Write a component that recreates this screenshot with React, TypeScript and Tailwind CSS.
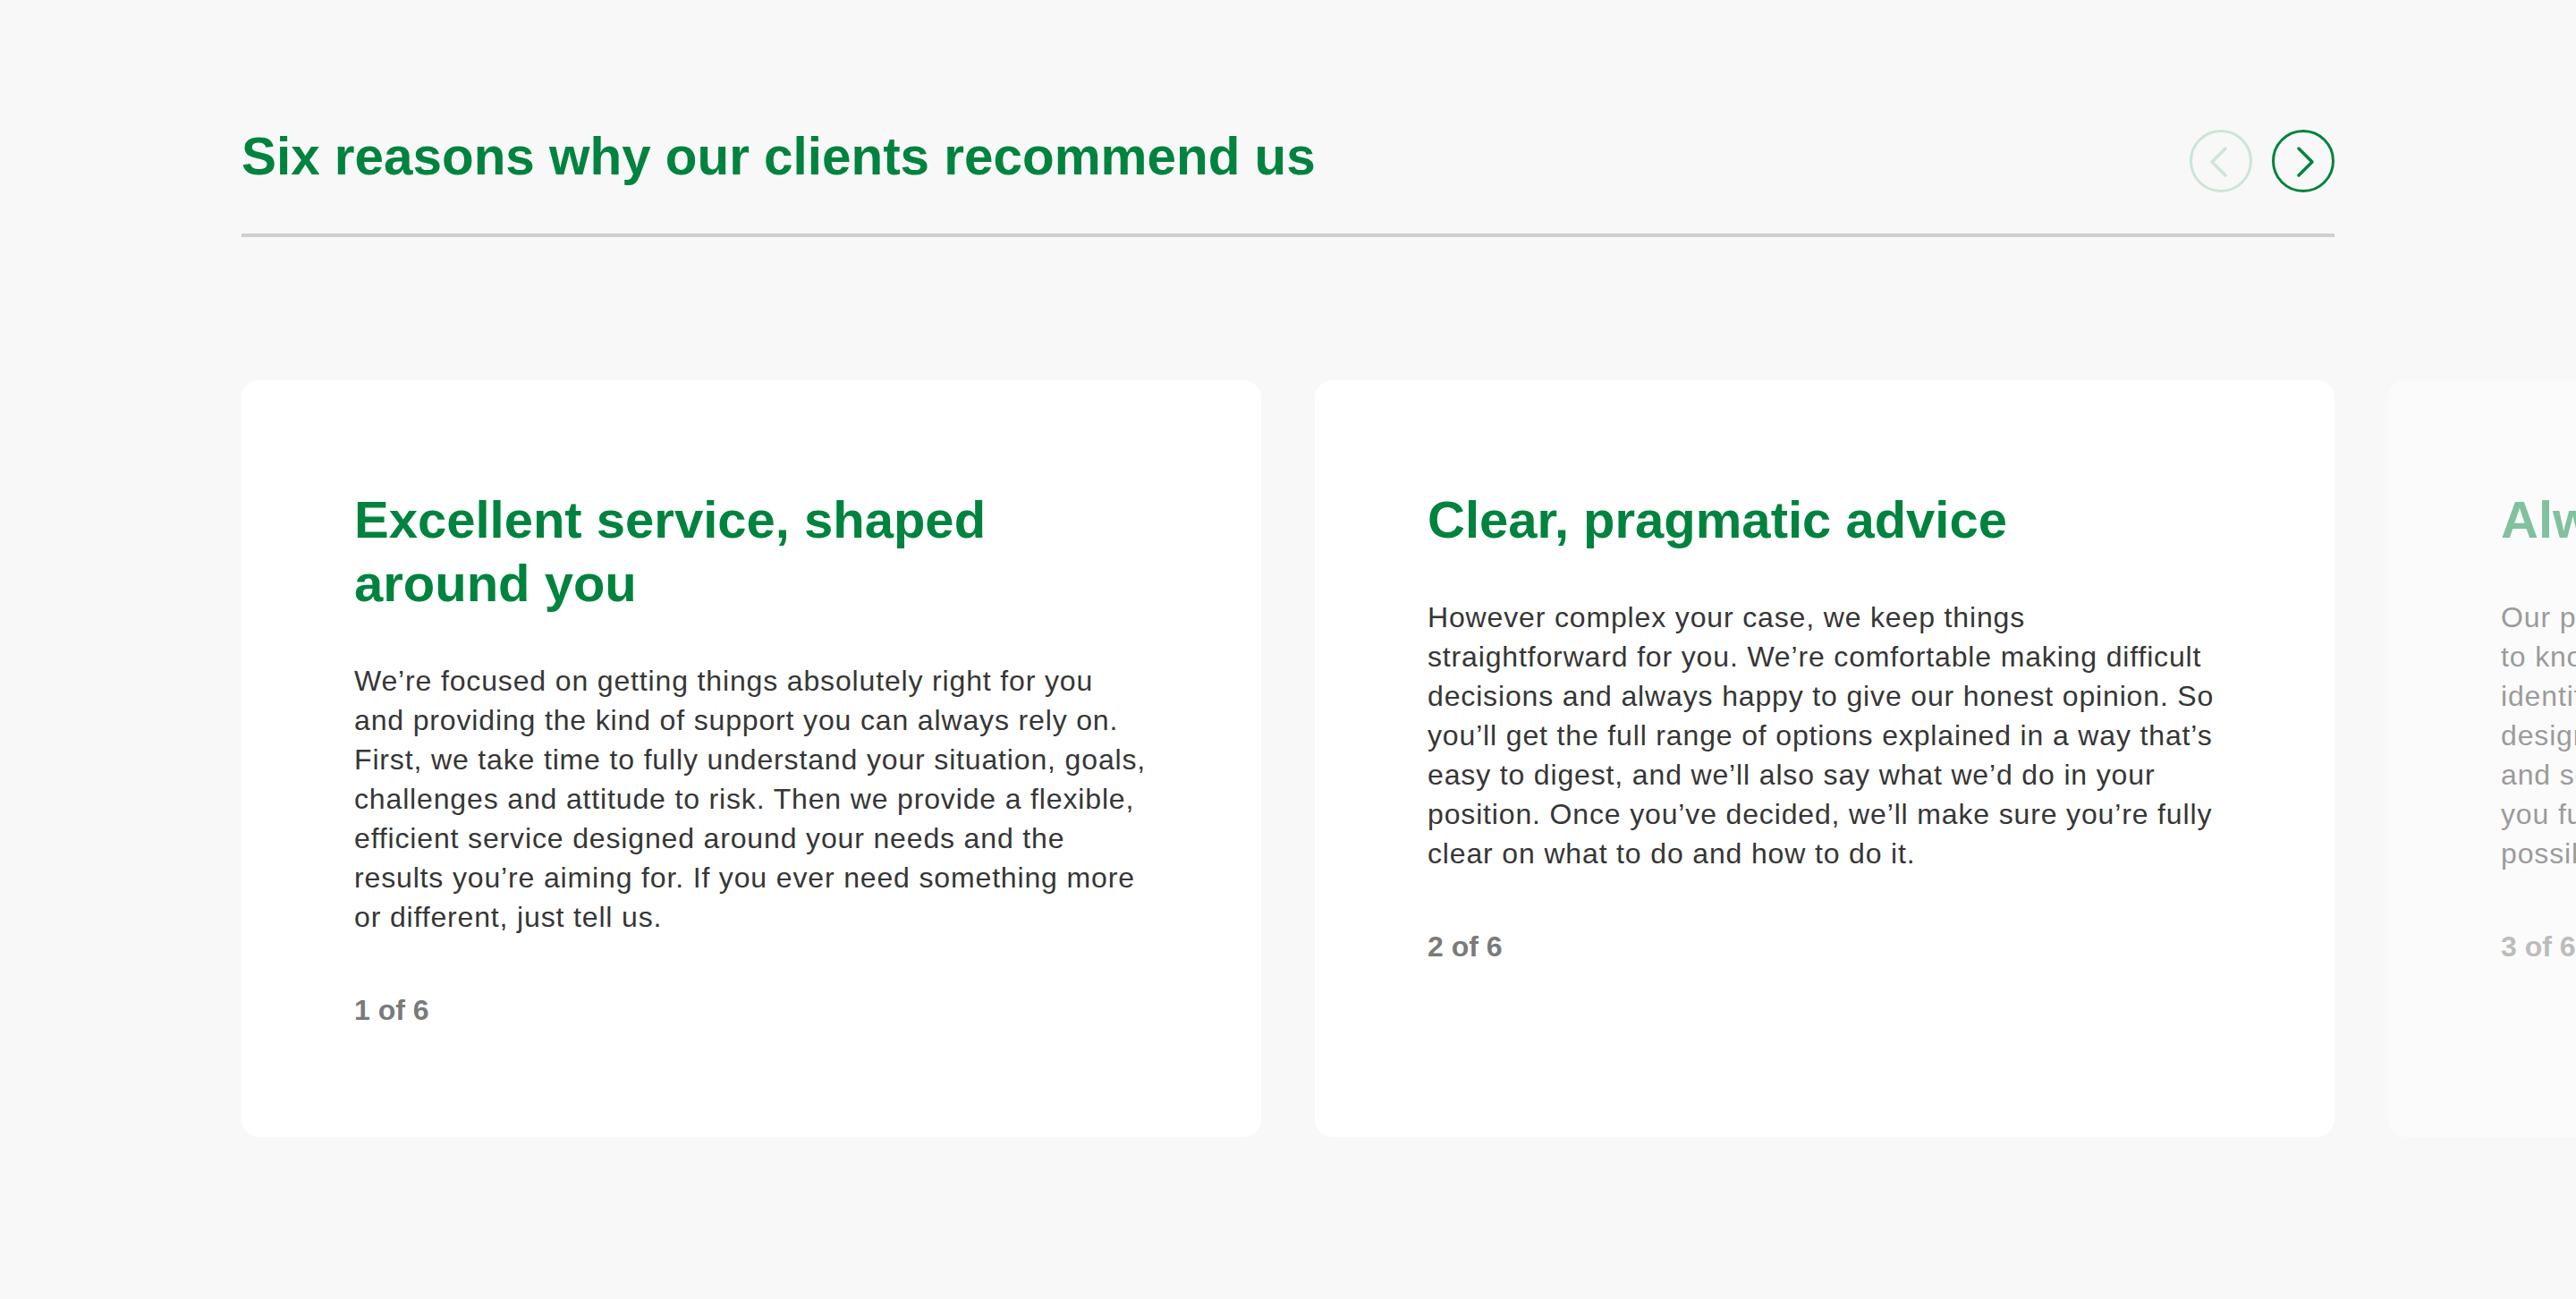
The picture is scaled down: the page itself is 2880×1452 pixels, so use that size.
import React from "react";

type Reason = {
  title: string;
  lines: string[];
};

const REASONS: Reason[] = [
  {
    title: "Excellent service, shaped around you",
    lines: [
      "We’re focused on getting things absolutely right for you",
      "and providing the kind of support you can always rely on.",
      "First, we take time to fully understand your situation, goals,",
      "challenges and attitude to risk. Then we provide a flexible,",
      "efficient service designed around your needs and the",
      "results you’re aiming for. If you ever need something more",
      "or different, just tell us."
    ]
  },
  {
    title: "Clear, pragmatic advice",
    lines: [
      "However complex your case, we keep things",
      "straightforward for you. We’re comfortable making difficult",
      "decisions and always happy to give our honest opinion. So",
      "you’ll get the full range of options explained in a way that’s",
      "easy to digest, and we’ll also say what we’d do in your",
      "position. Once you’ve decided, we’ll make sure you’re fully",
      "clear on what to do and how to do it."
    ]
  },
  {
    title: "Always there when you need us",
    lines: [
      "Our people take the time to get",
      "to know you, understand what you need,",
      "identify the issues that matter and",
      "design the right solutions with you,",
      "and so you can feel confident that",
      "you fully understand every step as",
      "possible, and that we’re always there."
    ]
  }
];

function ArrowButton({ dir, disabled }: { dir: "prev" | "next"; disabled?: boolean }) {
  const color = disabled ? "#cce5d6" : "#00833e";
  return (
    <button
      type="button"
      aria-label={dir === "prev" ? "Previous" : "Next"}
      disabled={disabled}
      className={
        "w-[70px] h-[70px] rounded-full border-[3px] flex items-center justify-center " +
        (disabled ? "border-[#cce5d6] cursor-default" : "border-[#00833e]")
      }
    >
      <svg width="70" height="70" viewBox="0 0 70 70" fill="none" className="shrink-0">
        <path
          d={dir === "prev" ? "M40 21 L25 36 L40 51" : "M30 21 L45 36 L30 51"}
          stroke={color}
          strokeWidth="3.5"
          strokeLinecap="round"
          strokeLinejoin="round"
        />
      </svg>
    </button>
  );
}

function ReasonCard({ reason, index, total, faded }: { reason: Reason; index: number; total: number; faded?: boolean }) {
  // the card that's only half in view is washed out rather than hidden
  return (
    <div
      className={
        "flex-none w-[1140px] rounded-[20px] pl-[126px] pr-[100px] pt-[120px] pb-[120px] " +
        (faded ? "bg-[#fbfbfb]" : "bg-white")
      }
    >
      <h3
        className={
          "max-w-[884px] text-[58px] leading-[71px] font-bold " +
          (faded ? "text-[#80c19e]" : "text-[#00833e]")
        }
      >
        {reason.title}
      </h3>
      <p
        className={
          "mt-[52px] text-[32px] leading-[44px] tracking-[0.85px] " +
          (faded ? "text-[#9b9b9b]" : "text-[#363636]")
        }
      >
        {reason.lines.map((line) => (
          <span key={line} className="block whitespace-nowrap">
            {line}
          </span>
        ))}
      </p>
      <p
        className={
          "mt-[60px] text-[32px] leading-[44px] font-bold " + (faded ? "text-[#bcbcbc]" : "text-[#7a7a7a]")
        }
      >
        {index + 1} of {total}
      </p>
    </div>
  );
}

export default function App() {
  return (
    <div className="min-h-screen w-full overflow-hidden bg-[#f8f8f8] font-['Liberation_Sans',Arial,sans-serif]">
      <section className="mx-[270px] pt-[140px] pb-[180px]">
        <div className="flex items-start justify-between">
          <h2 className="text-[58.4px] leading-[70px] font-bold text-[#00833e]">
            Six reasons why our clients recommend us
          </h2>
          <div className="mt-[5px] flex gap-[22px]">
            <ArrowButton dir="prev" disabled />
            <ArrowButton dir="next" />
          </div>
        </div>
        <div className="mt-[46px] h-[4px] bg-[#cfcfcf]" />

        {/* track keeps going past the right edge, the third card peeks in */}
        <div className="mt-[160px] flex gap-[60px]">
          {REASONS.map((r, i) => (
            <ReasonCard key={r.title} reason={r} index={i} total={6} faded={i > 1} />
          ))}
        </div>
      </section>
    </div>
  );
}
